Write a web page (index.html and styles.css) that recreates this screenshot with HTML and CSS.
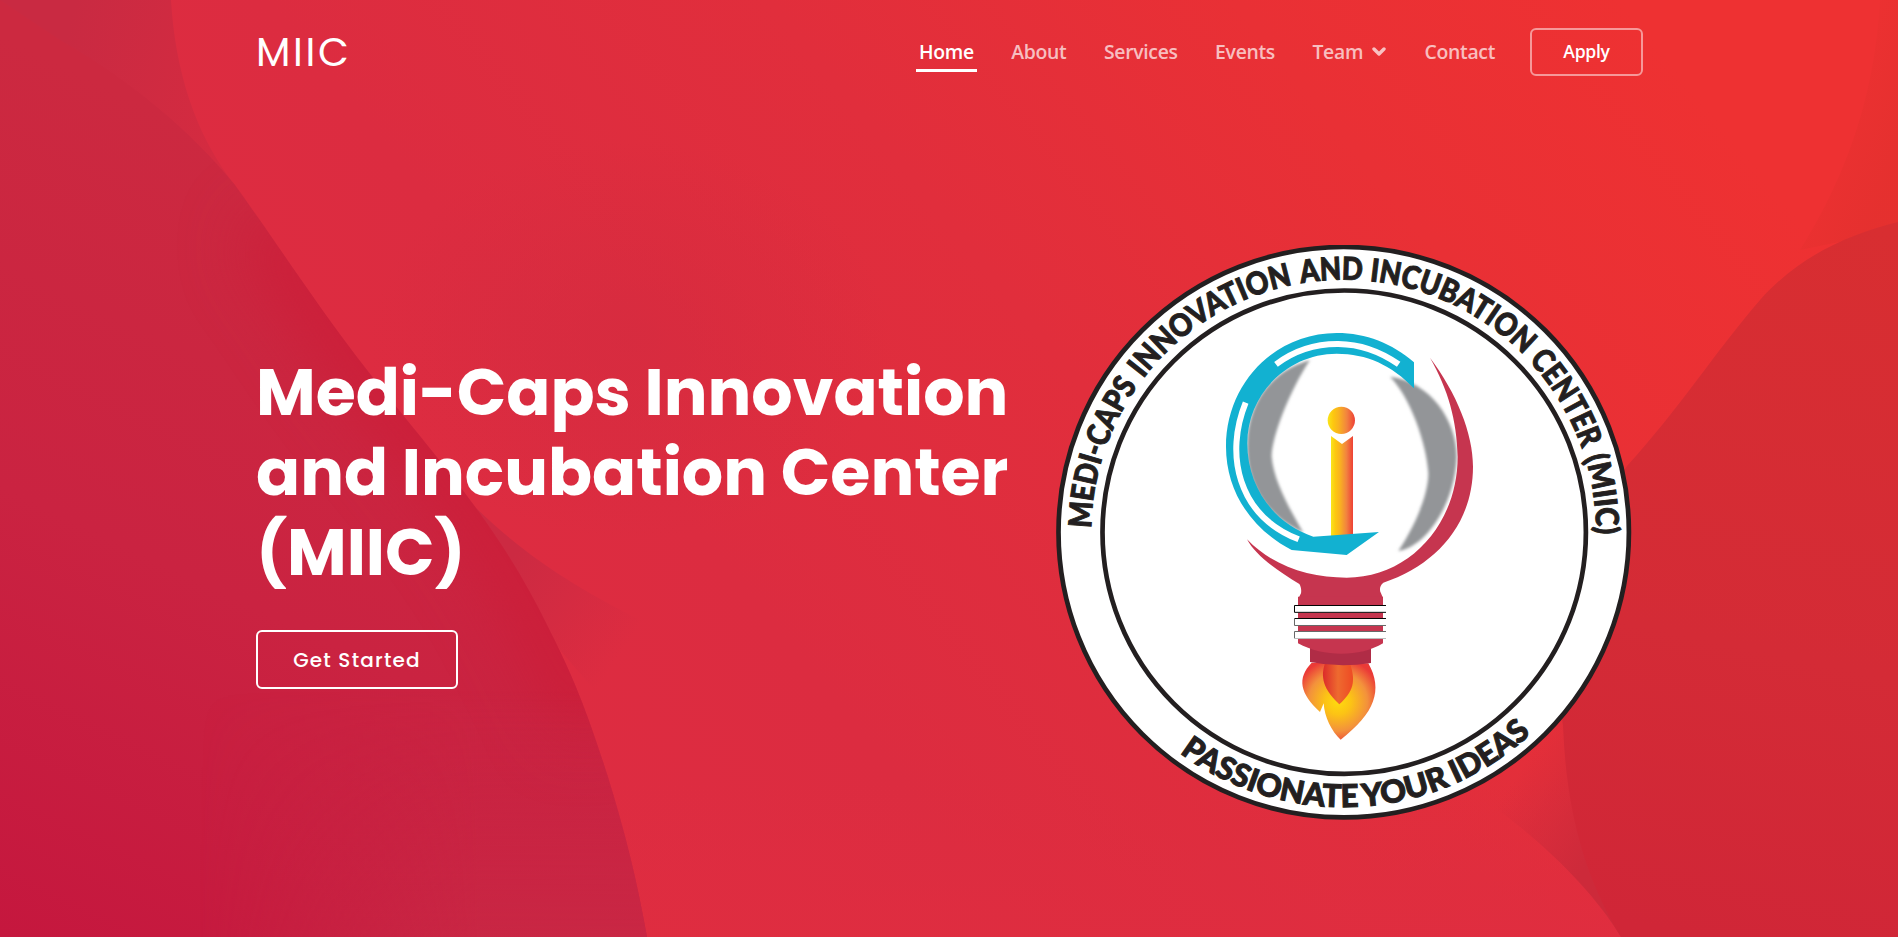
FILE: index.html
```html
<!DOCTYPE html>
<html lang="en">
<head>
<meta charset="utf-8">
<title>MIIC</title>
<link rel="stylesheet" href="styles.css">
</head>
<body>
<svg class="backdrop" viewBox="0 0 1898 937" preserveAspectRatio="none" aria-hidden="true">
  <defs>
    <linearGradient id="base" gradientUnits="userSpaceOnUse" x1="250" y1="700" x2="1420" y2="-250">
      <stop offset="0" stop-color="#df2c42"/><stop offset=".3" stop-color="#dc2c40"/><stop offset=".56" stop-color="#e12e3c"/><stop offset=".8" stop-color="#e93035"/><stop offset="1.0" stop-color="#ee3132"/>
    </linearGradient>
    <linearGradient id="left" gradientUnits="userSpaceOnUse" x1="0" y1="937" x2="350" y2="200">
      <stop offset="0" stop-color="#c5173e"/><stop offset=".5" stop-color="#ca2341"/><stop offset="1" stop-color="#cc2940"/>
    </linearGradient>
    <linearGradient id="low" gradientUnits="userSpaceOnUse" x1="0" y1="690" x2="0" y2="937">
      <stop offset="0" stop-color="#c92945" stop-opacity="0"/><stop offset="1" stop-color="#c92945" stop-opacity=".8"/>
    </linearGradient>
    <linearGradient id="lowmask" gradientUnits="userSpaceOnUse" x1="200" y1="0" x2="480" y2="0">
      <stop offset="0" stop-color="#000"/><stop offset="1" stop-color="#fff"/>
    </linearGradient>
    <mask id="fade"><rect width="1898" height="937" fill="url(#lowmask)"/></mask>
    <linearGradient id="floor" gradientUnits="userSpaceOnUse" x1="0" y1="780" x2="0" y2="937">
      <stop offset="0" stop-color="#df2d40" stop-opacity="0"/><stop offset="1" stop-color="#df2d40" stop-opacity=".8"/>
    </linearGradient>
    <clipPath id="blobClip"><path d="M0 0L60 40C130 80 190 130 235 185C285 255 320 310 367 370C410 425 445 465 476 508C510 555 530 590 551 633C575 680 590 720 608 777C625 832 637 880 647 937H0Z"/></clipPath>
    <filter id="haze" filterUnits="userSpaceOnUse" x="-100" y="-100" width="1100" height="1200" color-interpolation-filters="sRGB"><feGaussianBlur stdDeviation="32"/></filter>
    <linearGradient id="top" gradientUnits="userSpaceOnUse" x1="60" y1="60" x2="250" y2="110">
      <stop offset="0" stop-color="#c92a42"/><stop offset="1" stop-color="#d62b40"/>
    </linearGradient>
    <linearGradient id="wedge" gradientUnits="userSpaceOnUse" x1="510" y1="560" x2="630" y2="640">
      <stop offset="0" stop-color="#cc2a42"/><stop offset="1" stop-color="#cc2a42" stop-opacity="0"/>
    </linearGradient>
    <linearGradient id="right" gradientUnits="userSpaceOnUse" x1="1850" y1="220" x2="1700" y2="937">
      <stop offset="0" stop-color="#d82e31"/><stop offset=".6" stop-color="#d42b36"/><stop offset="1" stop-color="#d02637"/>
    </linearGradient>
    <linearGradient id="rwedge" gradientUnits="userSpaceOnUse" x1="1500" y1="800" x2="1590" y2="860">
      <stop offset="0" stop-color="#cd2a3a" stop-opacity="0"/><stop offset="1" stop-color="#cd2a3a"/>
    </linearGradient>
    <radialGradient id="shade"><stop offset="0" stop-color="#d32b3f" stop-opacity=".6"/><stop offset="1" stop-color="#d32b3f" stop-opacity="0"/></radialGradient>
    <linearGradient id="corner" gradientUnits="userSpaceOnUse" x1="1800" y1="120" x2="1898" y2="160">
      <stop offset="0" stop-color="#e3302e" stop-opacity="0"/><stop offset="1" stop-color="#e3302e" stop-opacity=".8"/>
    </linearGradient>
  </defs>
  <rect width="1898" height="937" fill="url(#base)"/>
  <rect y="780" width="1898" height="157" fill="url(#floor)"/>
  <ellipse cx="630" cy="340" rx="260" ry="200" fill="url(#shade)"/>
  <path d="M1880 0C1875 90 1850 170 1800 250L1898 230V0Z" fill="url(#corner)"/>
  <path d="M0 0H171C175 70 195 135 235 185V300H0Z" fill="url(#top)"/>
  <path d="M476 508C530 560 580 590 650 625L620 720L560 650Z" fill="url(#wedge)"/>
  <g clip-path="url(#blobClip)">
    <rect width="700" height="937" fill="url(#left)"/>
    <path d="M265 225C300 270 330 320 367 370C410 425 445 465 476 508C510 555 530 590 551 633C575 680 585 700 595 730" fill="none" stroke="#cc1d37" stroke-opacity=".9" stroke-width="60" filter="url(#haze)"/>
    <rect x="200" y="690" width="500" height="247" fill="url(#low)" mask="url(#fade)"/>
  </g>
  <path d="M1470 790C1530 830 1590 885 1621 937L1600 850L1563 720Z" fill="url(#rwedge)"/>
  <path d="M1898 222C1850 234 1800 255 1760 300C1715 352 1680 408 1627 466C1580 530 1550 640 1563 726C1566 800 1580 870 1621 937H1898Z" fill="url(#right)"/>
</svg>

<div class="page">
  <header class="header">
    <a class="brand">MIIC</a>
    <nav class="nav">
      <a class="nav-link active">Home</a>
      <a class="nav-link">About</a>
      <a class="nav-link">Services</a>
      <a class="nav-link">Events</a>
      <a class="nav-link">Team
        <svg class="chevron" viewBox="0 0 14 9"><path d="M2 2L7 7L12 2"/></svg>
      </a>
      <a class="nav-link">Contact</a>
    </nav>
    <a class="apply">Apply</a>
  </header>

  <main class="hero">
    <section class="intro">
      <h1 class="title">
        <span class="line">Medi-Caps Innovation</span>
        <span class="line">and Incubation Center</span>
        <span class="line">(MIIC)</span>
      </h1>
      <a class="start">Get Started</a>
    </section>

    <svg class="seal" viewBox="1056 245 576 575" role="img" aria-label="Medi-Caps Innovation and Incubation Center">
      <defs>
        <path id="arcTop" d="M1091.2 532.2A252.500 252.500 0 0 1 1596.2 532.2A252.500 252.500 0 0 1 1591 580"/>
        <path id="arcBottom" d="M1068.7 532.2A275 275 0 0 0 1618.7 532.2"/>
        <linearGradient id="gold" x1="0" x2="1"><stop offset="0" stop-color="#f9e51b"/><stop offset=".2" stop-color="#fdc80f"/><stop offset=".4" stop-color="#f9b31f"/><stop offset=".7" stop-color="#f2833f"/><stop offset="1" stop-color="#ee4036"/></linearGradient>
        <radialGradient id="flame" gradientUnits="userSpaceOnUse" cx="234" cy="515" r="130"><stop offset="0" stop-color="#fedb0e"/><stop offset=".3" stop-color="#fcc315"/><stop offset=".68" stop-color="#f3913c"/><stop offset="1" stop-color="#eb3a37"/></radialGradient>
        <linearGradient id="core" x1="0" x2="1"><stop offset="0" stop-color="#dc2b2a"/><stop offset=".5" stop-color="#ee6a2f"/><stop offset="1" stop-color="#ee4a24"/></linearGradient>
        <filter id="soft" x="-20%" y="-20%" width="140%" height="140%"><feGaussianBlur stdDeviation="5"/></filter>
      </defs>
      <circle class="ring" cx="1343.7" cy="532.2" r="285.2"/>
      <circle class="ring" cx="1344.2" cy="532.2" r="241.7"/>
      <g class="seal-text">
        <text><textPath href="#arcTop" startOffset="4" textLength="152" lengthAdjust="spacingAndGlyphs">MEDI-CAPS</textPath></text>
        <text><textPath href="#arcTop" startOffset="165" textLength="180" lengthAdjust="spacingAndGlyphs">INNOVATION</textPath></text>
        <text><textPath href="#arcTop" startOffset="353.500" textLength="62" lengthAdjust="spacingAndGlyphs">AND</textPath></text>
        <text><textPath href="#arcTop" startOffset="422.500" textLength="174" lengthAdjust="spacingAndGlyphs">INCUBATION</textPath></text>
        <text><textPath href="#arcTop" startOffset="604" textLength="104" lengthAdjust="spacingAndGlyphs">CENTER</textPath></text>
        <text><textPath href="#arcTop" startOffset="717" textLength="78" lengthAdjust="spacingAndGlyphs">(MIIC)</textPath></text>
        <text><textPath href="#arcBottom" startOffset="256" textLength="191" lengthAdjust="spacingAndGlyphs">PASSIONATE</textPath></text>
        <text><textPath href="#arcBottom" startOffset="451" textLength="90" lengthAdjust="spacingAndGlyphs">YOUR</textPath></text>
        <text><textPath href="#arcBottom" startOffset="547" textLength="91" lengthAdjust="spacingAndGlyphs">IDEAS</textPath></text>
      </g>
      <g transform="translate(1210 310) scale(.33333)">
        <g class="glass" filter="url(#soft)">
          <path d="M300 150C240 240 185 380 185 440C190 510 240 600 280 668C170 620 108 520 112 400C116 270 190 180 300 150Z"/>
          <path d="M540 200C660 215 740 330 740 440C735 580 650 710 565 723C620 640 655 550 655 490C650 400 600 260 540 200Z"/>
        </g>
        <circle cx="394" cy="331" r="41" fill="url(#gold)"/>
        <path d="M363 378L396 402L429 378V690H363Z" fill="url(#gold)"/>
        <path d="M612 157C545 100 470 69 380 69C195 69 48 220 48 410C48 540 120 655 245 720L410 735L507 666L310 680C190 640 112 530 112 400C112 250 235 131 380 131C470 131 545 165 612 235Z" fill="#12b1d1"/>
        <path class="glint" d="M198 163Q280 101 385 102Q480 103 566 163"/>
        <path class="glint" d="M107 278C45 430 80 615 266 688"/>
        <path d="M660 143C740 250 789 370 789 470C789 640 680 765 520 818C508 828 508 842 513 850L519 864V885H264V868L273 850C275 838 272 828 268 822C200 780 135 735 111 688C190 770 300 803 410 803C600 803 743 640 743 440C740 330 715 240 660 143Z" fill="#c6354f"/>
      </g>
      <g transform="translate(1260 530) scale(.33333)">
        <path d="M155 398C110 445 120 490 180 546L191 520C193 560 215 605 242 629C345 550 370 480 325 400Z" fill="url(#flame)"/>
        <path d="M195 400C185 430 180 470 238 523C280 485 288 455 270 400Z" fill="url(#core)"/>
        <path d="M150 350H333V399Q240 414 150 396Z" fill="#b02c46"/>
        <path d="M114 200H369V340C300 382 190 382 114 340Z" fill="#c6354f"/>
        <path fill="#fff" d="M103 226H378V248H103ZM103 265H378V287H103ZM103 304H378V326H103Z"/>
        <g fill="none" stroke-width="3"><path d="M378 226.500H103.500V247H378M378 265.500H103.500" stroke="#000"/><path d="M103.500 265V286.500H378M378 304.500H103.500V325" stroke="#666"/><path d="M103 325.500H378" stroke="#bbb"/></g>
      </g>
    </svg>
  </main>
</div>
</body>
</html>
```

FILE: styles.css
```css
* { box-sizing: border-box; }

body {
  margin: 0;
  height: 937px;
  overflow: hidden;
  background: #e02d3e;
  color: #fff;
  font-family: "Open Sans", sans-serif;
}

.backdrop {
  position: absolute;
  inset: 0;
  width: 100%;
  height: 100%;
}

.page {
  position: relative;
  width: 1387px;
  margin-left: 256px;
}

.header {
  display: flex;
  align-items: center;
  height: 104px;
}

.brand {
  font-family: Poppins, Inter, sans-serif;
  font-size: 40px;
  letter-spacing: 2.6px;
}

.nav {
  display: flex;
  margin-left: auto;
  margin-right: 35px;
  gap: 37.5px;
}

.nav-link {
  display: flex;
  align-items: center;
  font-size: 19.4px;
  font-weight: 600;
  letter-spacing: -.32px;
  line-height: 27px;
  padding-bottom: 1px;
  color: rgba(255, 255, 255, .7);
  white-space: nowrap;
}

.nav-link.active {
  color: #fff;
  position: relative;
}

.nav-link.active::after {
  content: "";
  position: absolute;
  left: -3.5px;
  right: -3.5px;
  bottom: -6px;
  height: 3px;
  background: #fff;
}

.chevron {
  width: 14px;
  height: 9px;
  margin: 0 1px 0 9px;
  fill: none;
  stroke: rgba(255, 255, 255, .7);
  stroke-width: 3.4;
  stroke-linecap: round;
  stroke-linejoin: round;
}

.apply {
  width: 113px;
  height: 48px;
  border: 2px solid rgba(255, 255, 255, .5);
  border-radius: 6px;
  font-size: 17.6px;
  font-weight: 600;
  letter-spacing: -.3px;
  line-height: 43px;
  text-align: center;
}

.hero {
  display: flex;
  justify-content: space-between;
  padding: 141px 11px 0 0;
}

.intro { padding-top: 108px; }

.title {
  margin: 0;
  font-family: Poppins, Inter, sans-serif;
  font-size: 65px;
  font-weight: 700;
  line-height: 80px;
}

.line { display: block; white-space: nowrap; }

.start {
  display: block;
  width: 202px;
  height: 59px;
  margin-top: 37px;
  padding-top: 1px;
  border: 2px solid #fff;
  border-radius: 6px;
  font-family: Poppins, Inter, sans-serif;
  font-size: 20px;
  font-weight: 500;
  line-height: 55px;
  letter-spacing: 1.2px;
  text-align: center;
}

.seal {
  display: block;
  width: 576px;
  height: 575px;
  flex: none;
}

.ring { fill: #fff; stroke: #231f20; stroke-width: 4.7; }

.seal-text {
  fill: #231f20;
  stroke: #231f20;
  stroke-width: 1;
  font-family: Lato, sans-serif;
  font-size: 31.5px;
  font-weight: 900;
}

.glass { fill: #939598; }

.glint { fill: none; stroke: #fff; stroke-width: 18; }
```
